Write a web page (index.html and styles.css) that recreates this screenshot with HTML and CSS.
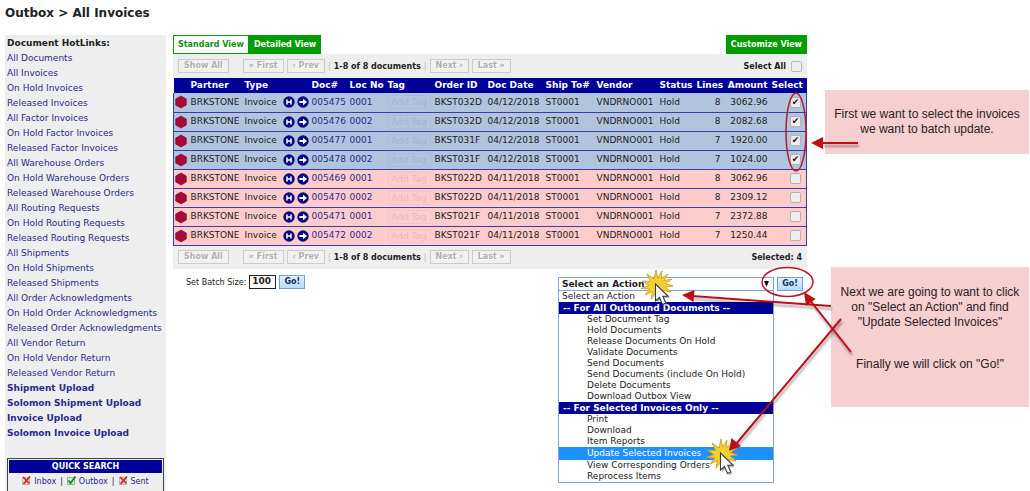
FILE: index.html
```html
<!DOCTYPE html>
<html lang="en">
<head>
<meta charset="utf-8">
<title>Outbox &gt; All Invoices</title>
<link rel="stylesheet" href="styles.css">
</head>
<body>
<svg class="defs" aria-hidden="true">
  <symbol id="hex" viewBox="0 0 12 14"><path d="M6 1 11.3 4v6L6 13 .7 10V4z" fill="#a80a38" stroke="#7c1436" stroke-width=".7"/></symbol>
  <symbol id="hist" viewBox="0 0 12 12"><circle cx="6" cy="6" r="5.7" fill="#0a0a86"/><path d="M4 3.4v5.2M8 3.4v5.2M4 6h4" stroke="#fff" stroke-width="1.5"/></symbol>
  <symbol id="go" viewBox="0 0 12 12"><circle cx="6" cy="6" r="5.7" fill="#0a0a86"/><path d="M2.4 4.9H6V2.8L10 6 6 9.2V7.1H2.4z" fill="#fff"/></symbol>
  <symbol id="cross" viewBox="0 0 9 9"><path d="M.5 1.500h7v7h-7z" fill="#f3d6d0" stroke="#b99" stroke-width=".7"/><path d="M1 1l6.500 6.500M8 .500 1.500 8" stroke="#c22a22" stroke-width="1.700"/></symbol>
  <symbol id="tick" viewBox="0 0 9 9"><path d="M.5 1.500h7v7h-7z" fill="#d5ecd2" stroke="#7a9a7a" stroke-width=".7"/><path d="M1.500 4.500 3.500 7.200 8.500.500" fill="none" stroke="#168a1c" stroke-width="1.800"/></symbol>
  <symbol id="click" viewBox="0 0 40 40">
    <path d="M16 1l1.700 8L22 2l-.8 7.500L28 5l-4 6.500 8-1.500-6.500 4.500L33 17l-8 1 6 5-8-1.500 3 7-6-5-1.500 8L16 24l-5 6 1.500-7.500L5 26l5-6-9-.5 8-3L2 12l8.500.5L7 5l7 5z" fill="#f6cf2e" stroke="#c49a1e" stroke-width=".8"/>
    <path d="M17 17v17l4-3.500 3 7 3.500-1.600-3-6.700h5.500z" fill="#888" opacity=".5"/>
    <path d="M15.500 15v17l4-3.500 3 7 3.300-1.600-3-6.600h5.400z" fill="#fff" stroke="#333b50" stroke-width="1.100"/>
  </symbol>
</svg>
<div class="page">
  <h1 class="title">Outbox &gt; All Invoices</h1>
  <div class="columns">
    <nav class="sidebar">
      <h2 class="side-title">Document HotLinks:</h2>
      <ul class="links">
        <li><a href="#">All Documents</a></li>
        <li><a href="#">All Invoices</a></li>
        <li><a href="#">On Hold Invoices</a></li>
        <li><a href="#">Released Invoices</a></li>
        <li><a href="#">All Factor Invoices</a></li>
        <li><a href="#">On Hold Factor Invoices</a></li>
        <li><a href="#">Released Factor Invoices</a></li>
        <li><a href="#">All Warehouse Orders</a></li>
        <li><a href="#">On Hold Warehouse Orders</a></li>
        <li><a href="#">Released Warehouse Orders</a></li>
        <li><a href="#">All Routing Requests</a></li>
        <li><a href="#">On Hold Routing Requests</a></li>
        <li><a href="#">Released Routing Requests</a></li>
        <li><a href="#">All Shipments</a></li>
        <li><a href="#">On Hold Shipments</a></li>
        <li><a href="#">Released Shipments</a></li>
        <li><a href="#">All Order Acknowledgments</a></li>
        <li><a href="#">On Hold Order Acknowledgments</a></li>
        <li><a href="#">Released Order Acknowledgments</a></li>
        <li><a href="#">All Vendor Return</a></li>
        <li><a href="#">On Hold Vendor Return</a></li>
        <li><a href="#">Released Vendor Return</a></li>
        <li><a class="strong" href="#">Shipment Upload</a></li>
        <li><a class="strong" href="#">Solomon Shipment Upload</a></li>
        <li><a class="strong" href="#">Invoice Upload</a></li>
        <li><a class="strong" href="#">Solomon Invoice Upload</a></li>
      </ul>
      <section class="quick">
        <h2 class="quick-title">QUICK SEARCH</h2>
        <div class="quick-row">
          <a href="#"><svg class="mini"><use href="#cross"/></svg>Inbox</a><span>|</span>
          <a href="#"><svg class="mini"><use href="#tick"/></svg>Outbox</a><span>|</span>
          <a href="#"><svg class="mini"><use href="#cross"/></svg>Sent</a>
        </div>
      </section>
    </nav>

    <main class="content">
      <div class="tabs">
        <button class="tab tab-open">Standard View</button>
        <button class="tab">Detailed View</button>
        <button class="tab tab-end">Customize View</button>
      </div>
      <div class="bar">
        <button class="pg pg-all" disabled>Show All</button>
        <button class="pg" disabled>« First</button>
        <button class="pg" disabled>‹ Prev</button>
        <span class="sep">|</span><span class="count">1-8 of 8 documents</span><span class="sep">|</span>
        <button class="pg" disabled>Next ›</button>
        <button class="pg" disabled>Last »</button>
        <label class="bar-end">Select All <input type="checkbox" class="box box-big"></label>
      </div>
      <table class="grid">
        <colgroup>
          <col class="c-mark"><col class="c-partner"><col class="c-type"><col class="c-act"><col class="c-doc"><col class="c-loc"><col class="c-tag"><col class="c-order"><col class="c-date"><col class="c-ship"><col class="c-vendor"><col class="c-status"><col class="c-lines"><col class="c-amount"><col class="c-select">
        </colgroup>
        <thead>
          <tr><th></th><th>Partner</th><th>Type</th><th></th><th>Doc#</th><th>Loc No</th><th>Tag</th><th>Order ID</th><th>Doc Date</th><th>Ship To#</th><th>Vendor</th><th>Status</th><th class="num">Lines</th><th class="num">Amount</th><th class="sel">Select</th></tr>
        </thead>
        <tbody>
          <tr class="on"><td><svg class="hex"><use href="#hex"/></svg></td><td>BRKSTONE</td><td>Invoice</td><td><span class="acts"><svg class="act"><use href="#hist"/></svg><svg class="act"><use href="#go"/></svg></span></td><td><a href="#">005475</a></td><td><a href="#">0001</a></td><td><button class="tag" disabled>Add Tag</button></td><td>BKST032D</td><td>04/12/2018</td><td>ST0001</td><td>VNDRNO001</td><td>Hold</td><td class="num">8</td><td class="num">3062.96</td><td class="sel"><input type="checkbox" class="box" aria-label="Select 005475" checked></td></tr>
          <tr class="on"><td><svg class="hex"><use href="#hex"/></svg></td><td>BRKSTONE</td><td>Invoice</td><td><span class="acts"><svg class="act"><use href="#hist"/></svg><svg class="act"><use href="#go"/></svg></span></td><td><a href="#">005476</a></td><td><a href="#">0002</a></td><td><button class="tag" disabled>Add Tag</button></td><td>BKST032D</td><td>04/12/2018</td><td>ST0001</td><td>VNDRNO001</td><td>Hold</td><td class="num">8</td><td class="num">2082.68</td><td class="sel"><input type="checkbox" class="box" aria-label="Select 005476" checked></td></tr>
          <tr class="on"><td><svg class="hex"><use href="#hex"/></svg></td><td>BRKSTONE</td><td>Invoice</td><td><span class="acts"><svg class="act"><use href="#hist"/></svg><svg class="act"><use href="#go"/></svg></span></td><td><a href="#">005477</a></td><td><a href="#">0001</a></td><td><button class="tag" disabled>Add Tag</button></td><td>BKST031F</td><td>04/12/2018</td><td>ST0001</td><td>VNDRNO001</td><td>Hold</td><td class="num">7</td><td class="num">1920.00</td><td class="sel"><input type="checkbox" class="box" aria-label="Select 005477" checked></td></tr>
          <tr class="on"><td><svg class="hex"><use href="#hex"/></svg></td><td>BRKSTONE</td><td>Invoice</td><td><span class="acts"><svg class="act"><use href="#hist"/></svg><svg class="act"><use href="#go"/></svg></span></td><td><a href="#">005478</a></td><td><a href="#">0002</a></td><td><button class="tag" disabled>Add Tag</button></td><td>BKST031F</td><td>04/12/2018</td><td>ST0001</td><td>VNDRNO001</td><td>Hold</td><td class="num">7</td><td class="num">1024.00</td><td class="sel"><input type="checkbox" class="box" aria-label="Select 005478" checked></td></tr>
          <tr><td><svg class="hex"><use href="#hex"/></svg></td><td>BRKSTONE</td><td>Invoice</td><td><span class="acts"><svg class="act"><use href="#hist"/></svg><svg class="act"><use href="#go"/></svg></span></td><td><a href="#">005469</a></td><td><a href="#">0001</a></td><td><button class="tag" disabled>Add Tag</button></td><td>BKST022D</td><td>04/11/2018</td><td>ST0001</td><td>VNDRNO001</td><td>Hold</td><td class="num">8</td><td class="num">3062.96</td><td class="sel"><input type="checkbox" class="box" aria-label="Select 005469"></td></tr>
          <tr><td><svg class="hex"><use href="#hex"/></svg></td><td>BRKSTONE</td><td>Invoice</td><td><span class="acts"><svg class="act"><use href="#hist"/></svg><svg class="act"><use href="#go"/></svg></span></td><td><a href="#">005470</a></td><td><a href="#">0002</a></td><td><button class="tag" disabled>Add Tag</button></td><td>BKST022D</td><td>04/11/2018</td><td>ST0001</td><td>VNDRNO001</td><td>Hold</td><td class="num">8</td><td class="num">2309.12</td><td class="sel"><input type="checkbox" class="box" aria-label="Select 005470"></td></tr>
          <tr><td><svg class="hex"><use href="#hex"/></svg></td><td>BRKSTONE</td><td>Invoice</td><td><span class="acts"><svg class="act"><use href="#hist"/></svg><svg class="act"><use href="#go"/></svg></span></td><td><a href="#">005471</a></td><td><a href="#">0001</a></td><td><button class="tag" disabled>Add Tag</button></td><td>BKST021F</td><td>04/11/2018</td><td>ST0001</td><td>VNDRNO001</td><td>Hold</td><td class="num">7</td><td class="num">2372.88</td><td class="sel"><input type="checkbox" class="box" aria-label="Select 005471"></td></tr>
          <tr><td><svg class="hex"><use href="#hex"/></svg></td><td>BRKSTONE</td><td>Invoice</td><td><span class="acts"><svg class="act"><use href="#hist"/></svg><svg class="act"><use href="#go"/></svg></span></td><td><a href="#">005472</a></td><td><a href="#">0002</a></td><td><button class="tag" disabled>Add Tag</button></td><td>BKST021F</td><td>04/11/2018</td><td>ST0001</td><td>VNDRNO001</td><td>Hold</td><td class="num">7</td><td class="num">1250.44</td><td class="sel"><input type="checkbox" class="box" aria-label="Select 005472"></td></tr>
        </tbody>
      </table>
      <div class="bar bar-foot">
        <button class="pg pg-all" disabled>Show All</button>
        <button class="pg" disabled>« First</button>
        <button class="pg" disabled>‹ Prev</button>
        <span class="sep">|</span><span class="count">1-8 of 8 documents</span><span class="sep">|</span>
        <button class="pg" disabled>Next ›</button>
        <button class="pg" disabled>Last »</button>
        <span class="bar-end">Selected: 4</span>
      </div>
      <div class="actions">
        <form class="batch">
          <label for="batch">Set Batch Size:</label>
          <input id="batch" class="batch-input" type="text" value="100">
          <button class="go" type="button">Go!</button>
        </form>
        <form class="chooser">
          <div class="combo">
            <div class="combo-head">
              <select class="combo-select" aria-label="Select an Action"><option>Select an Action</option></select>
              <svg class="caret" viewBox="0 0 5 6"><path d="M0 0h5L2.500 6z" fill="#111"/></svg>
            </div>
            <ul class="menu" role="listbox" aria-label="Actions">
              <li class="opt opt-first" role="option">Select an Action</li>
              <li class="opt opt-group">-- For All Outbound Documents --</li>
              <li class="opt" role="option">Set Document Tag</li>
              <li class="opt" role="option">Hold Documents</li>
              <li class="opt" role="option">Release Documents On Hold</li>
              <li class="opt" role="option">Validate Documents</li>
              <li class="opt" role="option">Send Documents</li>
              <li class="opt" role="option">Send Documents (include On Hold)</li>
              <li class="opt" role="option">Delete Documents</li>
              <li class="opt" role="option">Download Outbox View</li>
              <li class="opt opt-group">-- For Selected Invoices Only --</li>
              <li class="opt" role="option">Print</li>
              <li class="opt" role="option">Download</li>
              <li class="opt" role="option">Item Reports</li>
              <li class="opt opt-active" role="option" aria-selected="true">Update Selected Invoices</li>
              <li class="opt" role="option">View Corresponding Orders</li>
              <li class="opt" role="option">Reprocess Items</li>
            </ul>
          </div>
          <button class="go" type="button">Go!</button>
        </form>
      </div>
    </main>

    <aside class="notes">
      <p class="note note-first">First we want to select the invoices<br>we want to batch update.</p>
      <div class="note note-next">
        <p>Next we are going to want to click<br>on "Select an Action" and find<br>"Update Selected Invoices"</p>
        <p>Finally we will click on "Go!"</p>
      </div>
    </aside>
  </div>

  <svg class="overlay" width="1030" height="491" viewBox="0 0 1030 491" aria-hidden="true">
    <g fill="none" stroke="#b51a2c" stroke-width="1.500">
      <ellipse cx="796" cy="132" rx="10" ry="39"/>
      <ellipse cx="787.500" cy="282" rx="25.500" ry="14.500"/>
    </g>
    <use href="#click" x="640" y="269" width="40" height="40"/>
    <use href="#click" x="705" y="438" width="40" height="40"/>
    <g class="arrows" stroke="#c00d14" stroke-width="2">
      <path d="M858 143H822"/><path d="M831 306 692 296"/><path d="M851 352 809 299"/><path d="M841 319 736 444"/>
    </g>
    <g fill="#c00d14">
      <path d="M811 143 823 137v12z"/><path d="M682 295 694.500 290l-1 12z"/><path d="M804 292 815.500 299l-9.500 7z"/><path d="M729 451l2.500-13 9.500 8z"/>
    </g>
  </svg>
</div>
</body>
</html>
```
FILE: styles.css
```css
* { box-sizing: border-box; }

body {
  margin: 0;
  background: #fff;
  color: #222;
  font: 9px/15px "DejaVu Sans", sans-serif;
}

h1, h2, p, ul, form { margin: 0; padding: 0; }
ul { list-style: none; }
button, input, select { font: inherit; color: inherit; margin: 0; }
a { color: #2a2a8e; text-decoration: none; }

.defs { position: absolute; width: 0; height: 0; }

.page {
  position: relative;
  display: flex;
  flex-direction: column;
  min-height: 100vh;
  padding: 5px 1px 0 5px;
}

.title {
  font-size: 12px;
  line-height: 16px;
  padding-bottom: 14px;
}

.columns {
  flex: 1;
  display: grid;
  grid-template-columns: 161px minmax(0, 1fr) 204px;
}

/* Sidebar */
.sidebar {
  display: flex;
  flex-direction: column;
  background: #eee;
  padding: 1px 2px 0;
  white-space: nowrap;
}
.side-title { font-size: 9px; line-height: 15px; }
.strong { font-weight: bold; }
.quick {
  flex: 1;
  margin-top: 17px;
  border: 1px solid #444;
  border-bottom: 0;
}
.quick-title {
  margin: 1px;
  background: #000098;
  color: #fff;
  font-size: 8px;
  line-height: 13px;
  text-align: center;
}
.quick-row {
  display: flex;
  justify-content: center;
  gap: 4px;
  font-size: 8px;
  line-height: 16px;
}
.quick-row a { display: flex; gap: 3px; }
.mini { width: 9px; height: 9px; margin-top: 2px; }

/* Content */
.content { margin: 0 18px 0 7px; white-space: nowrap; min-width: 0; }

.tabs { display: flex; }
.tab {
  height: 19px;
  padding: 0 4px;
  border: 1px solid #009c00;
  background: #009c00;
  color: #fff;
  font-size: 8px;
  font-weight: bold;
}
.tab-open { background: #fff; color: #149014; }
.tab-end { margin-left: auto; }

.bar {
  display: flex;
  align-items: center;
  gap: 3px;
  height: 24px;
  padding: 0 5px;
  background: #eee;
  font-size: 8px;
  font-weight: bold;
}
.bar-foot { height: 23px; }
.pg {
  height: 14px;
  padding: 0 5px;
  border: 1px solid #ccc;
  background: #f0f0f0;
  color: #b0b0b0;
  line-height: 12px;
  text-shadow: 1px 1px #fff;
}
.pg-all { margin-right: 11px; }
.sep { color: #bbb; font-weight: normal; }
.bar-end { display: flex; align-items: center; gap: 5px; margin-left: auto; }

.grid {
  width: 100%;
  table-layout: fixed;
  border-collapse: collapse;
  font-size: 9px;
  line-height: 15px;
}
.c-mark { width: 17px; }
.c-partner { width: 54px; }
.c-type { width: 38px; }
.c-act { width: 29px; }
.c-doc { width: 38px; }
.c-loc { width: 38px; }
.c-tag { width: 47px; }
.c-order { width: 53px; }
.c-date { width: 58px; }
.c-ship { width: 51px; }
.c-vendor { width: 63px; }
.c-status { width: 37px; }
.c-lines { width: 28px; }
.c-amount { width: 47px; }

.grid th { padding: 0; height: 15px; background: #000098; color: #fff; text-align: left; }
.grid td { padding: 0; height: 19px; background: #fcc; border-bottom: 1px solid #3c3ca8; }
.grid td:first-child { border-left: 1px solid #3c3ca8; }
.grid td:last-child { border-right: 1px solid #3c3ca8; }
.grid .on td { background: #b0c4de; }
.grid .num { text-align: right; padding-right: 4px; }
.grid .sel { text-align: right; padding-right: 5px; }

.hex { display: block; width: 12px; height: 14px; margin-left: 1px; }
.acts { display: flex; gap: 2px; }
.act { width: 12px; height: 12px; }
.tag {
  display: block;
  width: 43px;
  height: 14px;
  padding: 0;
  border: 1px solid #f3c3c5;
  background: transparent;
  color: #e5b9bd;
  line-height: 12px;
}
.on .tag { border-color: #a9bdd6; color: #9fb4cf; }

.box {
  appearance: none;
  display: inline-grid;
  place-items: center;
  width: 11px;
  height: 11px;
  border: 1px solid #b5b0b0;
  border-radius: 2px;
  background: #eee;
  vertical-align: middle;
}
.box-big { border-color: #bbb; }
.box:checked::after {
  content: "✔";
  color: #111;
  font-size: 9px;
  line-height: 9px;
}

/* Batch and action forms */
.actions {
  display: flex;
  justify-content: space-between;
  align-items: flex-start;
  padding: 6px 4px 0 13px;
}
.batch, .chooser { display: flex; align-items: flex-start; gap: 3px; }
.batch { font-size: 8px; }
.batch-input {
  width: 27px;
  height: 14px;
  padding: 0 2px;
  border: 1px solid #222;
  font-size: 9px;
  font-weight: bold;
}
.go {
  height: 14px;
  width: 26px;
  padding: 0;
  border: 1px solid #6ea3cf;
  background: linear-gradient(#e2f1fc, #b8dcf5);
  color: #14286e;
  font-size: 8px;
  line-height: 12px;
  font-weight: bold;
}
.chooser { padding-top: 2px; }
.combo { width: 216px; }
.combo-head { display: flex; align-items: center; border: 1px solid #86a4d4; height: 14px; padding-right: 4px; }
.combo-select {
  appearance: none;
  flex: 1;
  border: 0;
  padding: 0 3px;
  background: transparent;
  font-weight: bold;
  line-height: 12px;
}
.caret { width: 5px; height: 6px; }
.menu { border: 1px solid #86a4d4; border-top: 0; background: #fff; }
.opt { padding-left: 28px; font-size: 9px; line-height: 11px; }
.opt-first { padding-left: 3px; }
.opt-group { padding-left: 4px; background: #000098; color: #fff; font-weight: bold; line-height: 12px; }
.opt-active { background: #1e90ff; color: #fff; line-height: 13px; }

/* Notes */
.notes {
  padding-top: 55px;
  color: #2a2024;
  font: 12px/15px "Liberation Sans", sans-serif;
  text-align: center;
  white-space: nowrap;
}
.note { background: #f6cfd1; }
.note-first { padding: 17px 0; }
.note-next {
  display: grid;
  gap: 27px;
  margin: 113px 0 0 6px;
  padding: 18px 0 35px;
}

.overlay { position: absolute; top: 0; left: 0; pointer-events: none; }
.arrows { filter: drop-shadow(1px 3px 1px rgba(0, 0, 0, .35)); }
```
